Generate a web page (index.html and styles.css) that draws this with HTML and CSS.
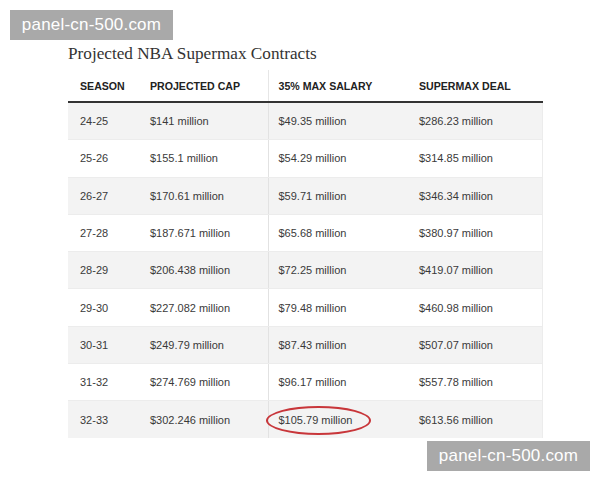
FILE: index.html
```html
<!DOCTYPE html>
<html>
<head>
<meta charset="utf-8">
<link rel="stylesheet" href="styles.css">
</head>
<body>
<div class="wm wm-top">panel-cn-500.com</div>
<h1 class="title">Projected NBA Supermax Contracts</h1>
<table class="grid">
  <colgroup><col class="c1"><col class="c2"><col class="c3"><col class="c4"></colgroup>
  <thead>
    <tr><th>Season</th><th>Projected Cap</th><th class="div">35% Max Salary</th><th>Supermax Deal</th></tr>
  </thead>
  <tbody>
    <tr><td>24-25</td><td>$141 million</td><td class="div">$49.35 million</td><td>$286.23 million</td></tr>
    <tr><td>25-26</td><td>$155.1 million</td><td class="div">$54.29 million</td><td>$314.85 million</td></tr>
    <tr><td>26-27</td><td>$170.61 million</td><td class="div">$59.71 million</td><td>$346.34 million</td></tr>
    <tr><td>27-28</td><td>$187.671 million</td><td class="div">$65.68 million</td><td>$380.97 million</td></tr>
    <tr><td>28-29</td><td>$206.438 million</td><td class="div">$72.25 million</td><td>$419.07 million</td></tr>
    <tr><td>29-30</td><td>$227.082 million</td><td class="div">$79.48 million</td><td>$460.98 million</td></tr>
    <tr><td>30-31</td><td>$249.79 million</td><td class="div">$87.43 million</td><td>$507.07 million</td></tr>
    <tr><td>31-32</td><td>$274.769 million</td><td class="div">$96.17 million</td><td>$557.78 million</td></tr>
    <tr><td>32-33</td><td>$302.246 million</td><td class="div circled"><span class="ring"></span>$105.79 million</td><td>$613.56 million</td></tr>
  </tbody>
</table>
<div class="wm-row"><div class="wm">panel-cn-500.com</div></div>
</body>
</html>
```
FILE: styles.css
```css
html, body { margin: 0; padding: 0; background: #fff; }
body { font-family: "Liberation Sans", Arial, sans-serif; width: 600px; height: 480px; overflow: hidden; }
.wm {
  width: 163px; height: 30px; line-height: 30px;
  background: #a9a9a9; color: #fff;
  font-size: 17px; text-align: center; letter-spacing: 0.2px;
}
.wm-top { margin: 10px 0 0 10px; }
.title {
  margin: 0 0 0 68px; height: 26px; line-height: 26px; padding-top: 1px;
  font-family: "Liberation Serif", "Times New Roman", serif;
  font-weight: normal; font-size: 17.2px; color: #333;
}
.grid {
  margin: 3px 0 0 68px; width: 474px;
  border-collapse: collapse; table-layout: fixed;
  color: #3a3a3a; font-size: 11px;
}
.c1 { width: 70px; } .c2 { width: 130px; } .c3 { width: 139px; } .c4 { width: 135px; }
.grid th {
  height: 31px; padding: 0 0 0 12px; text-align: left; vertical-align: middle;
  font-size: 10.6px; font-weight: bold; text-transform: uppercase; color: #222;
  border-bottom: 2px solid #333;
}
.grid td {
  height: 36.3px; padding: 0 0 0 12px; vertical-align: middle;
  border-bottom: 1px solid #ececec;
}
.grid tbody tr:nth-child(odd) td { background: #f3f3f3; }
.grid tbody tr td:last-child { border-right: 1px solid #ececec; }
.grid tbody tr:last-child td { border-bottom: none; }
.grid .div { border-left: 1px solid #e2e2e2; padding-left: 10px; }
.grid th.div { border-left: 1px solid #e6e6e6; }
.circled { position: relative; }
.ring {
  position: absolute; left: -3px; top: 5px; width: 101px; height: 25px;
  border: 2px solid #c8363a; border-radius: 50%;
}
.wm-row { display: flex; justify-content: flex-end; padding: 3px 10px 0 0; }
```
